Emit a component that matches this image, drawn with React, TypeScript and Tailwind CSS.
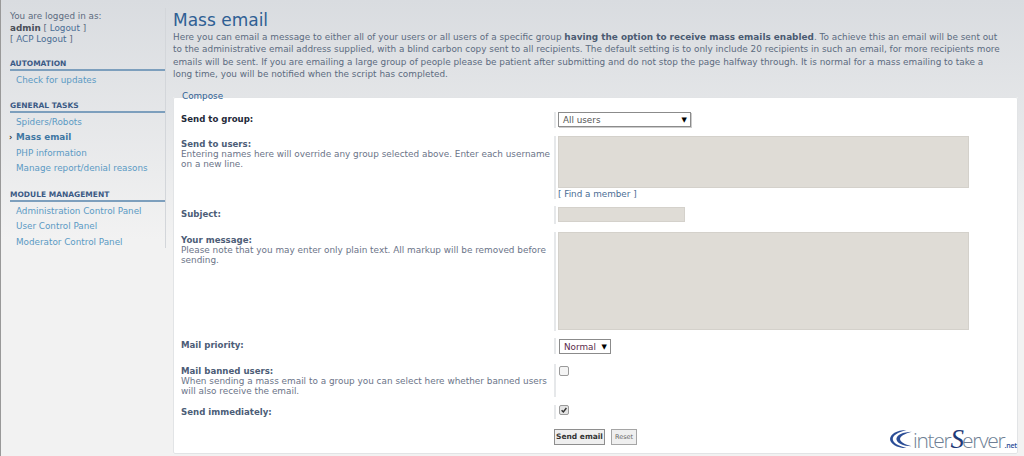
const font = "font-['DejaVu_Sans',Verdana,sans-serif]";

function NavBlock({ title, items, active }: { title: string; items: string[]; active?: string }) {
  return (
    <div className="mb-[12px]">
      <h3 className="border-b-2 border-[#7d9fbd] text-[7.5px] leading-[11px] font-bold uppercase text-[#3b5a85]">{title}</h3>
      <ul className="pt-[1.5px]">
        {items.map((item) => (
          <li key={item} className="relative h-[15.6px] pl-[6px] text-[8.8px] leading-[15.6px] whitespace-nowrap">
            {item === active && <span className="absolute left-[-1px] top-0 text-[8px] font-bold text-[#333]">›</span>}
            <span className={item === active ? 'font-bold text-[#3f77a3]' : 'text-[#5b9ac4]'}>{item}</span>
          </li>
        ))}
      </ul>
    </div>
  );
}

function Row({ label, help, strong, className, labelClass, children }: { label: string; help?: string[]; strong?: boolean; className: string; labelClass: string; children: React.ReactNode }) {
  return (
    <div className={`flex ${className}`}>
      <div className={`w-[373px] shrink-0 text-[8.9px] leading-[10.3px] whitespace-nowrap ${labelClass}`}>
        <div className={`text-[8.6px] leading-[10.5px] font-bold ${strong ? 'text-[#1f2a3a]' : 'text-[#4c5d77]'}`}>{label}</div>
        {help?.map((line) => (
          <div key={line} className="text-[#6b7488]">{line}</div>
        ))}
      </div>
      <div className="border-l-2 border-[#e6e8ea] pl-[2px] flex-1">{children}</div>
    </div>
  );
}

const inputBox = 'bg-[#dfdcd6] border border-[#d4d1cb]';

export default function App() {
  return (
    <div className={`${font} relative flex h-[456px] w-[1024px] overflow-hidden bg-[linear-gradient(#d9dce0,#f2f2f2_240px)] border-l border-[#999999]`}>
      <aside className="mt-[8px] h-[240px] w-[165px] shrink-0 border-r border-[#d3d6da] pl-[9px] pt-[3px]">
        <div className="mb-[12px] text-[8.8px] leading-[11.7px] text-[#5c6b80] whitespace-nowrap">
          <div>You are logged in as:</div>
          <div><b className="text-[#4a4f58]">admin</b> [ <span className="text-[#4a6d94]">Logout</span> ]</div>
          <div>[ <span className="text-[#4a6d94]">ACP Logout</span> ]</div>
        </div>
        <NavBlock title="Automation" items={['Check for updates']} />
        <NavBlock title="General Tasks" items={['Spiders/Robots', 'Mass email', 'PHP information', 'Manage report/denial reasons']} active="Mass email" />
        <NavBlock title="Module Management" items={['Administration Control Panel', 'User Control Panel', 'Moderator Control Panel']} />
      </aside>

      <main className="flex-1 pl-[7px] pr-[5px] pt-[10px]">
        <h1 className="text-[17px] leading-[20px] font-normal text-[#2f5f94]">Mass email</h1>
        <p className="mt-[1px] text-[8.9px] leading-[12.4px] text-[#5c6b80] whitespace-nowrap">
          Here you can email a message to either all of your users or all users of a specific group <b className="text-[#4a5a72]">having the option to receive mass emails enabled</b>. To achieve this an email will be sent out<br />
          to the administrative email address supplied, with a blind carbon copy sent to all recipients. The default setting is to only include 20 recipients in such an email, for more recipients more<br />
          emails will be sent. If you are emailing a large group of people please be patient after submitting and do not stop the page halfway through. It is normal for a mass emailing to take a<br />
          long time, you will be notified when the script has completed.
        </p>

        <fieldset className="relative mt-[16px] h-[357px] w-[845px] bg-white rounded-[2px] border border-[#e2e4e6] pl-[7px] pt-[13px]">
          <span className="absolute left-[8px] top-[-8px] text-[8.8px] leading-[12px] font-medium text-[#2f5f94]">Compose</span>

          <Row label="Send to group:" strong className="mt-[1px] h-[16px]" labelClass="pt-[2px]">
            <div className="relative h-[15px] w-[133px] border border-[#8b8b8b] bg-white shadow-[1px_1px_0_#ccc] pl-[4px] text-[8.8px] leading-[14px] text-[#555]">
              All users
              <span className="absolute right-[3px] top-0 text-[7px] text-black">▼</span>
            </div>
          </Row>

          <Row label="Send to users:" help={['Entering names here will override any group selected above. Enter each username', 'on a new line.']} className="mt-[8px] h-[63px]" labelClass="pt-[3px]">
            <div className={`${inputBox} h-[52px] w-[411px]`} />
            <div className="mt-px text-[8.8px] leading-[11px] text-[#4a6d94]">[ Find a member ]</div>
          </Row>

          <Row label="Subject:" className="mt-[7px] h-[18px]" labelClass="pt-[3px]">
            <div className={`${inputBox} mt-px h-[15px] w-[127px]`} />
          </Row>

          <Row label="Your message:" help={['Please note that you may enter only plain text. All markup will be removed before', 'sending.']} className="mt-[8px] h-[99px]" labelClass="pt-[3px]">
            <div className={`${inputBox} h-[98px] w-[411px]`} />
          </Row>

          <Row label="Mail priority:" className="mt-[7px] h-[16px]" labelClass="pt-[2px]">
            <div className="relative mt-px ml-px h-[15px] w-[52px] border border-[#8b8b8b] bg-white pl-[4px] text-[8.8px] leading-[14px] text-[#5a2a4a]">
              Normal
              <span className="absolute right-[3px] top-0 text-[7px] text-black">▼</span>
            </div>
          </Row>

          <Row label="Mail banned users:" help={['When sending a mass email to a group you can select here whether banned users', 'will also receive the email.']} className="mt-[10px] h-[33px]" labelClass="pt-[2px]">
            <div className="ml-px mt-[2px] h-[10px] w-[10px] rounded-[2px] border border-[#9a9a9a] bg-[#f4f4f4]" />
          </Row>

          <Row label="Send immediately:" className="mt-[8px] h-[14px]" labelClass="pt-[2px]">
            <div className="ml-px flex h-[10px] w-[10px] items-center justify-center rounded-[2px] border border-[#9a9a9a] bg-[#e4e4e4]">
              <svg viewBox="0 0 10 10" className="h-[10px] w-[10px]"><path d="M2 5.2 4.2 7.5 8 2.5" fill="none" stroke="#333" strokeWidth="1.8" /></svg>
            </div>
          </Row>

          <div className="ml-[373px] mt-[10px] flex gap-[6px]">
            <div className="h-[16px] w-[51px] border border-[#8e8e8e] bg-[#efefef] text-center text-[7.5px] font-bold leading-[14px] text-[#333]">Send email</div>
            <div className="h-[16px] w-[26px] border border-[#a5a5a5] bg-[#efefef] text-center text-[6.5px] leading-[14px] text-[#666]">Reset</div>
          </div>
        </fieldset>
      </main>

      {/* logo */}
      <div className="absolute right-0 bottom-[3px] flex h-[28px] w-[136px] items-end whitespace-nowrap">
        <svg viewBox="0 0 25 22" className="mb-[4px] h-[20px] w-[25px] shrink-0">
          <path d="M19 1C8 1 1 6 1 11s7 10 18 10C9 18 4 15 4 11s5-7 15-10Z" fill="#2b4d96" />
          <path d="M25 3C15 3 8 7 8 11s7 8 17 8C17 17 12 14 12 11s5-6 13-8Z" fill="#2b4d96" />
        </svg>
        <span className="font-['Open_Sans',sans-serif] font-light text-[21px] leading-[26px] tracking-[-1.3px] text-[#6f7f95]">
          inter<span className="font-['Liberation_Serif',serif] italic text-[27px] leading-[26px] tracking-[-2px] text-[#1e3a78]">S</span>erver
        </span>
        <span className="mb-[1px] font-['Open_Sans',sans-serif] text-[7px] leading-[13px] font-semibold tracking-[-0.2px] text-[#2b4d96]">.net</span>
      </div>
    </div>
  );
}
